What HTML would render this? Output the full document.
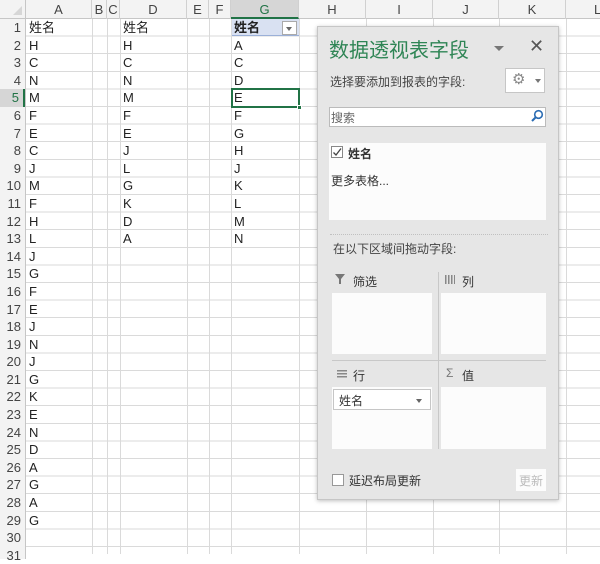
<!DOCTYPE html>
<html><head><meta charset="utf-8"><style>
*{margin:0;padding:0;box-sizing:border-box}
body{width:600px;height:554px;overflow:hidden;position:relative;background:#fff;font-family:"Liberation Sans","Noto Sans CJK SC",sans-serif;color:#222}
.grid{position:absolute;left:0;top:19px;width:600px;height:540px;background:repeating-linear-gradient(to bottom,transparent 0,transparent 16.6px,#dadada 16.6px,#dadada 17.6px)}
.v{position:absolute;top:0;width:1px;height:554px;background:#dadada}
.hdr{position:absolute;left:0;top:0;width:600px;height:19px;background:#f3f3f3;border-bottom:1px solid #c6c6c6}
.hc{position:absolute;top:0;height:19px;line-height:19px;text-align:center;font-size:13px;color:#444;border-right:1px solid #d0d0d0}
.rh{position:absolute;left:0;top:19px;width:26px;background:#f3f3f3;border-right:1px solid #c6c6c6;height:540px}
.rh div,.col div{height:17.6px;line-height:17.6px;font-size:13px}
.rh div{text-align:right;padding-right:4px;color:#444}
.col{position:absolute;top:19px}
.p{position:absolute;font-size:12px;color:#444;white-space:nowrap}
.box{position:absolute;background:#fcfcfc}
</style></head><body>
<div class="grid"></div>
<div class="v" style="left:92px"></div><div class="v" style="left:107px"></div><div class="v" style="left:120px"></div><div class="v" style="left:187px"></div><div class="v" style="left:209px"></div><div class="v" style="left:231px"></div><div class="v" style="left:299px"></div><div class="v" style="left:366px"></div><div class="v" style="left:433px"></div><div class="v" style="left:499px"></div><div class="v" style="left:566px"></div>
<div class="hdr"></div>
<div style="position:absolute;left:0;top:0;width:26px;height:19px;background:#f3f3f3;border-right:1px solid #c6c6c6;border-bottom:1px solid #c6c6c6"></div>
<div style="position:absolute;left:13px;top:6px;width:0;height:0;border-left:9px solid transparent;border-bottom:9px solid #d6d6d6"></div>
<div class="hc" style="left:26px;width:66px">A</div><div class="hc" style="left:92px;width:15px">B</div><div class="hc" style="left:107px;width:13px">C</div><div class="hc" style="left:120px;width:67px">D</div><div class="hc" style="left:187px;width:22px">E</div><div class="hc" style="left:209px;width:22px">F</div><div class="hc" style="left:231px;width:68px;background:#d6d6d6;color:#217346;border-bottom:2px solid #217346">G</div><div class="hc" style="left:299px;width:67px">H</div><div class="hc" style="left:366px;width:67px">I</div><div class="hc" style="left:433px;width:66px">J</div><div class="hc" style="left:499px;width:67px">K</div><div class="hc" style="left:566px;width:40px;text-align:left;padding-left:28px">L</div>
<div class="rh"><div>1</div><div>2</div><div>3</div><div>4</div><div style="background:#d6d6d6;color:#217346;border-right:2px solid #217346">5</div><div>6</div><div>7</div><div>8</div><div>9</div><div>10</div><div>11</div><div>12</div><div>13</div><div>14</div><div>15</div><div>16</div><div>17</div><div>18</div><div>19</div><div>20</div><div>21</div><div>22</div><div>23</div><div>24</div><div>25</div><div>26</div><div>27</div><div>28</div><div>29</div><div>30</div><div>31</div></div>
<div class="col" style="left:29px"><div>姓名</div><div>H</div><div>C</div><div>N</div><div>M</div><div>F</div><div>E</div><div>C</div><div>J</div><div>M</div><div>F</div><div>H</div><div>L</div><div>J</div><div>G</div><div>F</div><div>E</div><div>J</div><div>N</div><div>J</div><div>G</div><div>K</div><div>E</div><div>N</div><div>D</div><div>A</div><div>G</div><div>A</div><div>G</div></div>
<div class="col" style="left:123px"><div>姓名</div><div>H</div><div>C</div><div>N</div><div>M</div><div>F</div><div>E</div><div>J</div><div>L</div><div>G</div><div>K</div><div>D</div><div>A</div></div>
<div style="position:absolute;left:232px;top:19px;width:67px;height:17px;background:#d9e1f2;border-bottom:1px solid #9bb0d8"></div>
<div style="position:absolute;left:282px;top:21px;width:15px;height:14px;background:#fff;border:1px solid #aaa"></div>
<div style="position:absolute;left:286px;top:27px;border-left:3.5px solid transparent;border-right:3.5px solid transparent;border-top:4px solid #666"></div>
<div class="col" style="left:234px"><div style="font-weight:bold">姓名</div><div>A</div><div>C</div><div>D</div><div>E</div><div>F</div><div>G</div><div>H</div><div>J</div><div>K</div><div>L</div><div>M</div><div>N</div></div>
<div style="position:absolute;left:231px;top:88px;width:69px;height:20px;border:2px solid #217346"></div>
<div style="position:absolute;left:297px;top:105px;width:5px;height:5px;background:#217346;border:1px solid #fff"></div>

<div style="position:absolute;left:317px;top:26px;width:242px;height:474px;background:#e6e6e6;border:1px solid #c6c6c6;box-shadow:0 1px 4px rgba(0,0,0,.25)"></div>
<div class="p" style="left:329px;top:34px;font-size:20px;color:#2f8555">数据透视表字段</div>
<div style="position:absolute;left:494px;top:46px;border-left:5px solid transparent;border-right:5px solid transparent;border-top:5px solid #777"></div>
<div class="p" style="left:529px;top:36px;font-size:18px;color:#555">✕</div>
<div class="p" style="left:330px;top:73px">选择要添加到报表的字段:</div>
<div style="position:absolute;left:505px;top:68px;width:40px;height:25px;background:#fff;border:1px solid #c6c6c6"></div>
<div class="p" style="left:512px;top:70px;font-size:15px;color:#888">⚙</div>
<div style="position:absolute;left:535px;top:79px;border-left:3.5px solid transparent;border-right:3.5px solid transparent;border-top:4px solid #777"></div>
<div style="position:absolute;left:329px;top:107px;width:217px;height:20px;background:#fff;border:1px solid #bbb"></div>
<div class="p" style="left:331px;top:109px;color:#666">搜索</div>
<svg style="position:absolute;left:530px;top:109px" width="14" height="14"><circle cx="8.5" cy="5.5" r="3.8" fill="none" stroke="#2b6cb3" stroke-width="1.6"/><line x1="6" y1="8" x2="2" y2="12" stroke="#2b6cb3" stroke-width="2"/></svg>
<div class="box" style="left:329px;top:143px;width:217px;height:77px"></div>
<div style="position:absolute;left:331px;top:146px;width:12px;height:12px;border:1px solid #888;background:#fff"></div>
<svg style="position:absolute;left:331px;top:146px" width="12" height="12"><path d="M2.5 6.5L5 9L10 2.5" fill="none" stroke="#444" stroke-width="1.3"/></svg>
<div class="p" style="left:348px;top:145px;color:#333;font-weight:bold">姓名</div>
<div class="p" style="left:331px;top:172px;color:#333">更多表格...</div>
<div style="position:absolute;left:330px;top:234px;width:218px;border-top:1px dotted #c0c0c0"></div>
<div class="p" style="left:333px;top:240px">在以下区域间拖动字段:</div>
<svg style="position:absolute;left:335px;top:274px" width="10" height="10"><path d="M0 0H10L6 5V10H4V5Z" fill="#777"/></svg>
<div class="p" style="left:353px;top:273px;color:#333">筛选</div>
<div style="position:absolute;left:445px;top:275px;width:10px;height:9px;background:repeating-linear-gradient(to right,#888 0 1.5px,transparent 1.5px 3px)"></div>
<div class="p" style="left:462px;top:273px;color:#333">列</div>
<div class="box" style="left:332px;top:293px;width:100px;height:61px"></div>
<div class="box" style="left:441px;top:293px;width:105px;height:61px"></div>
<div style="position:absolute;left:332px;top:360px;width:214px;height:1px;background:#c8c8c8"></div>
<div style="position:absolute;left:438px;top:272px;width:1px;height:177px;background:#c8c8c8"></div>
<div style="position:absolute;left:337px;top:370px;width:10px;height:8px;background:repeating-linear-gradient(#888 0 1.5px,transparent 1.5px 3px)"></div>
<div class="p" style="left:353px;top:367px;color:#333">行</div>
<div class="p" style="left:446px;top:366px;color:#777">Σ</div>
<div class="p" style="left:462px;top:367px;color:#333">值</div>
<div class="box" style="left:332px;top:387px;width:100px;height:62px"></div>
<div class="box" style="left:441px;top:387px;width:105px;height:62px"></div>
<div style="position:absolute;left:333px;top:389px;width:98px;height:21px;background:#fff;border:1px solid #c6c6c6"></div>
<div class="p" style="left:339px;top:392px;color:#333">姓名</div>
<div style="position:absolute;left:416px;top:399px;border-left:3.5px solid transparent;border-right:3.5px solid transparent;border-top:4px solid #666"></div>
<div style="position:absolute;left:332px;top:474px;width:12px;height:12px;border:1px solid #999;background:#fff"></div>
<div class="p" style="left:349px;top:472px;color:#333">延迟布局更新</div>
<div style="position:absolute;left:516px;top:469px;width:30px;height:22px;background:#fcfcfc"></div>
<div class="p" style="left:519px;top:472px;color:#bbb">更新</div>
</body></html>
